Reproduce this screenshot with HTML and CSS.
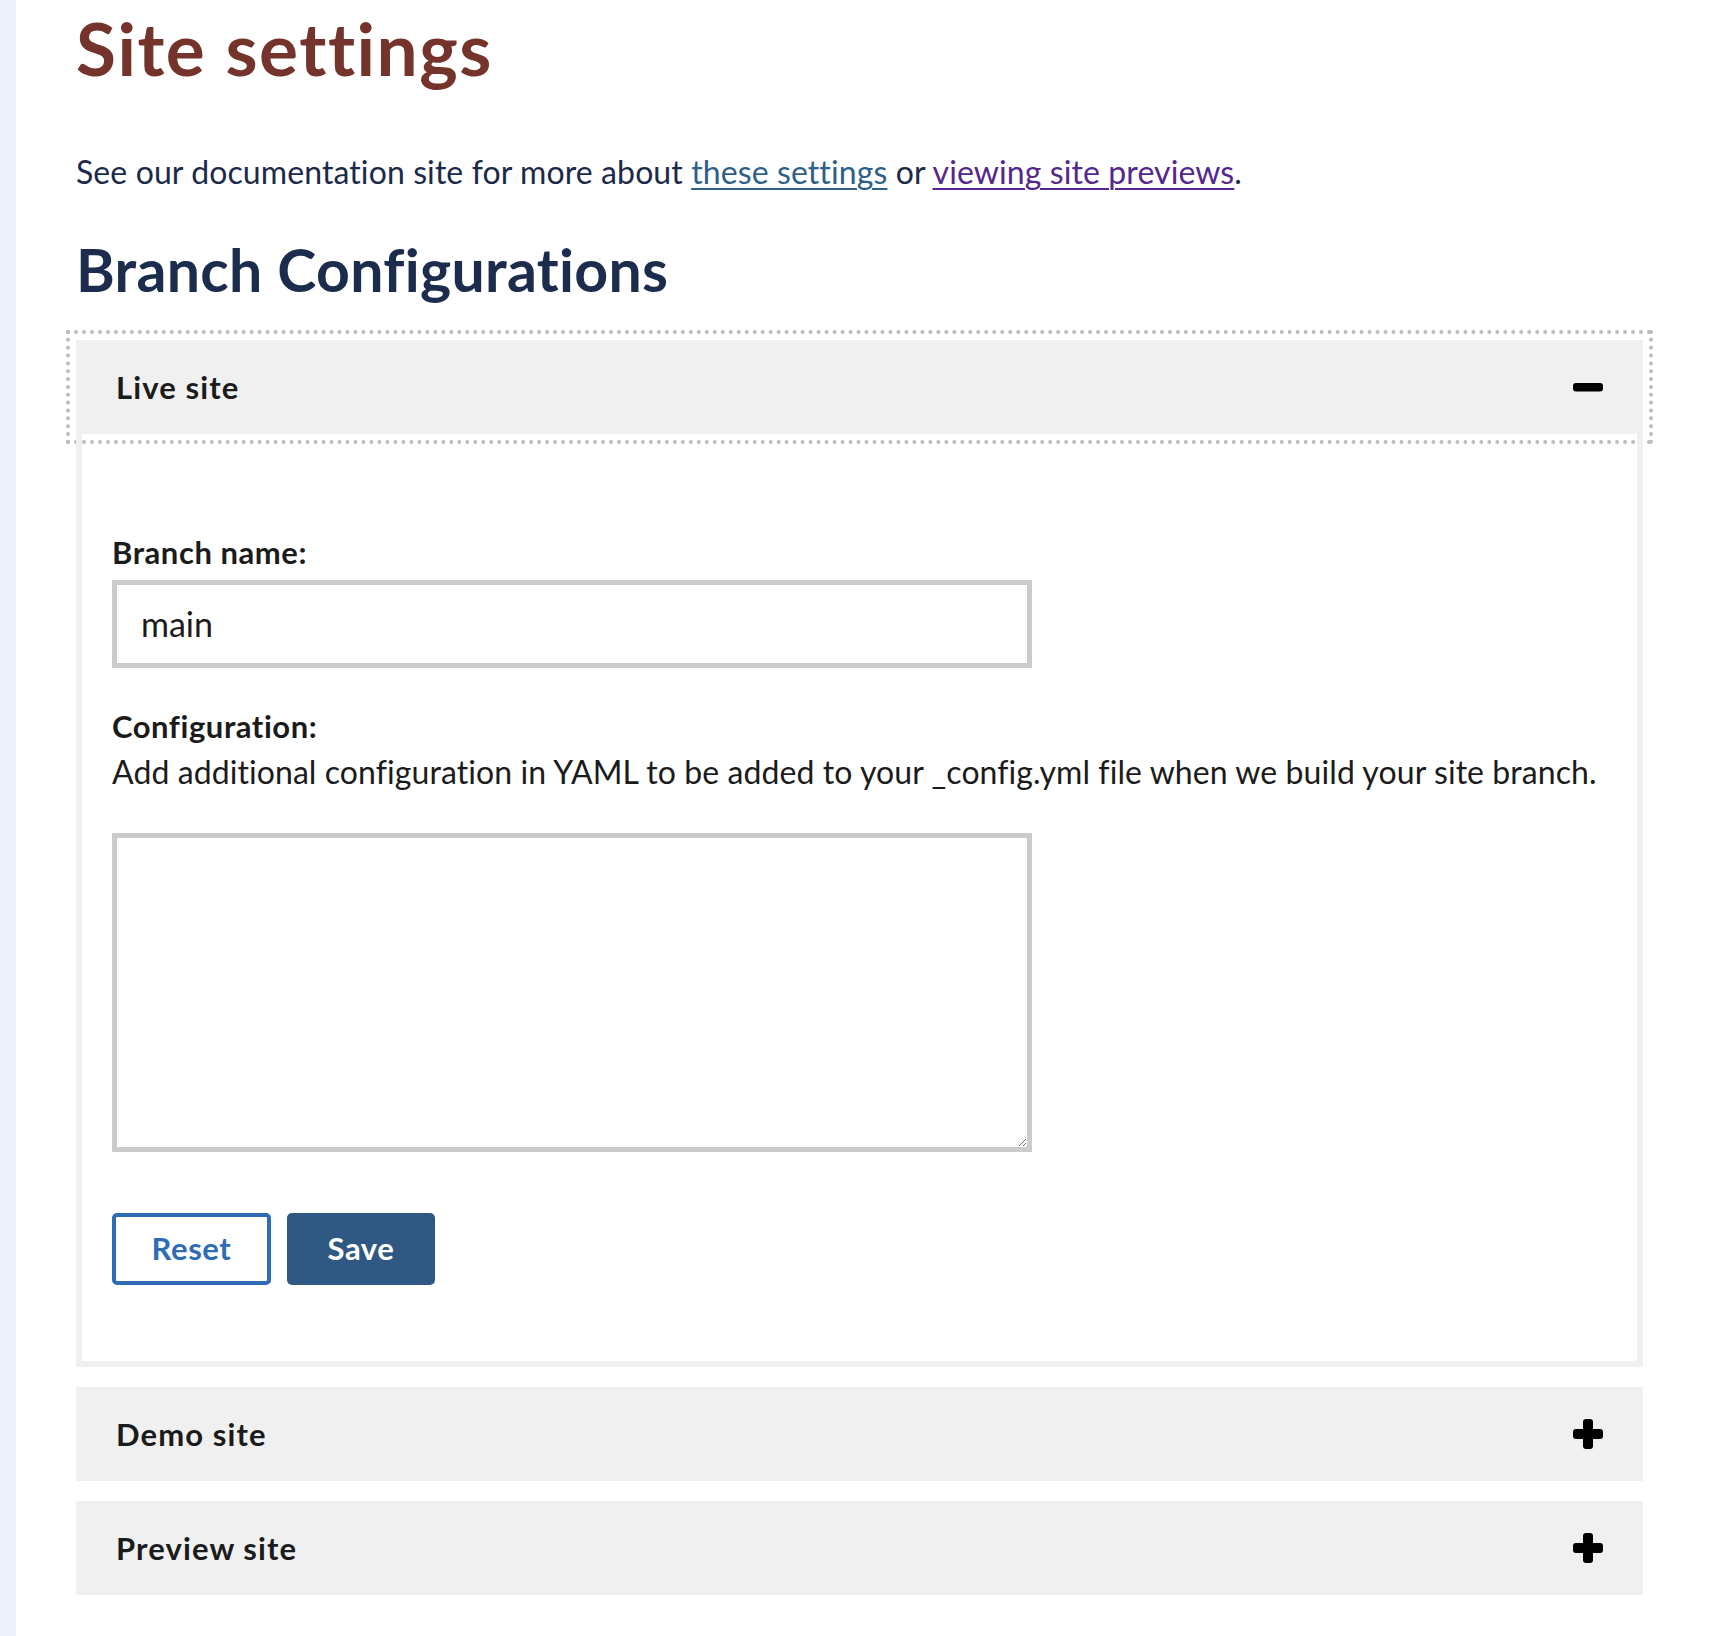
FILE: index.html
```html
<!DOCTYPE html>
<html lang="en">
<head>
<meta charset="utf-8">
<title>Site settings</title>
<link rel="stylesheet" href="styles.css">
</head>
<body>
<div class="layout">
  <aside class="side"></aside>
  <main class="main">
    <h1 class="title">Site settings</h1>
    <p class="intro">See our documentation site for more about <a class="link" href="#settings">these settings</a> or <a class="link link-visited" href="#previews">viewing site previews</a>.</p>
    <h2 class="section-title">Branch Configurations</h2>
    <div class="accordion">
      <div class="acc-item">
        <button class="acc-head is-focused" type="button" aria-expanded="true">
          <span class="acc-title">Live site</span>
          <svg class="acc-icon" width="30" height="30" viewBox="0 0 30 30" aria-hidden="true"><rect x="0" y="11" width="30" height="8.5" rx="3"/></svg>
        </button>
        <div class="acc-body">
          <form class="form">
            <label class="label" for="branch">Branch name:</label>
            <input class="input" id="branch" type="text" value="main">
            <label class="label label-config" for="config">Configuration:</label>
            <p class="help">Add additional configuration in YAML to be added to your _config.yml file when we build your site branch.</p>
            <textarea class="textarea" id="config"></textarea>
            <div class="actions">
              <button class="btn btn-outline" type="button">Reset</button>
              <button class="btn btn-primary" type="button">Save</button>
            </div>
          </form>
        </div>
      </div>
      <div class="acc-item">
        <button class="acc-head" type="button" aria-expanded="false">
          <span class="acc-title">Demo site</span>
          <svg class="acc-icon" width="30" height="30" viewBox="0 0 30 30" aria-hidden="true"><rect x="0" y="10" width="30" height="10" rx="3"/><rect x="10" y="0" width="10" height="30" rx="3"/></svg>
        </button>
      </div>
      <div class="acc-item">
        <button class="acc-head" type="button" aria-expanded="false">
          <span class="acc-title">Preview site</span>
          <svg class="acc-icon" width="30" height="30" viewBox="0 0 30 30" aria-hidden="true"><rect x="0" y="10" width="30" height="10" rx="3"/><rect x="10" y="0" width="10" height="30" rx="3"/></svg>
        </button>
      </div>
    </div>
  </main>
</div>
</body>
</html>
```

FILE: styles.css
```css
* {
  box-sizing: border-box;
}

html, body {
  margin: 0;
  padding: 0;
  background: #ffffff;
}

body {
  font-family: "Lato", "Liberation Sans", sans-serif;
  color: #1b1b1b;
  -webkit-font-smoothing: antialiased;
}

.layout {
  display: flex;
  min-height: 100vh;
}

.side {
  width: 16px;
  flex: none;
  background: #edf2fa;
}

.main {
  flex: 1;
  display: flex;
  flex-direction: column;
  padding: 0 79px 40px 60px;
}

.title {
  margin: 5px 0 0;
  font-size: 73px;
  line-height: 1.2;
  font-weight: 700;
  letter-spacing: 1.5px;
  color: #74342b;
}

.intro {
  margin: 60px 0 0;
  font-size: 32px;
  line-height: 1.2;
  letter-spacing: 0.1px;
  color: #1b2a4a;
}

.link {
  color: #2e5f88;
  text-decoration: underline;
  text-decoration-thickness: 2px;
  text-underline-offset: 4px;
}

.link-visited {
  color: #54278f;
}

.section-title {
  margin: 44px 0 0;
  font-size: 59px;
  line-height: 1.2;
  font-weight: 700;
  letter-spacing: 0.3px;
  color: #1b2c4d;
}

.accordion {
  margin-top: 34px;
  display: flex;
  flex-direction: column;
  gap: 20px;
}

.acc-item {
  display: flex;
  flex-direction: column;
}

.acc-head {
  display: flex;
  align-items: center;
  justify-content: space-between;
  width: 100%;
  height: 94px;
  padding: 0 40px 0 40px;
  margin: 0;
  border: 0;
  background: #f0f0f0;
  font-family: inherit;
  font-size: 31px;
  font-weight: 700;
  letter-spacing: 1.1px;
  color: #1b1b1b;
  text-align: left;
  cursor: pointer;
}

.acc-head.is-focused {
  outline: 4px dotted #bcbcc0;
  outline-offset: 6px;
}

.acc-title {
  line-height: 1.2;
  padding-top: 2px;
}

.acc-icon {
  display: block;
  fill: #000000;
}

.acc-body {
  border: 6px solid #f0f0f0;
  border-top: 0;
  padding: 100px 30px 76px 30px;
}

.form {
  display: flex;
  flex-direction: column;
  align-items: flex-start;
}

.label {
  display: block;
  font-size: 31px;
  line-height: 1.2;
  font-weight: 700;
  letter-spacing: 0.55px;
  color: #1b1b1b;
}

.input {
  margin-top: 9px;
  width: 920px;
  height: 88px;
  border: 5px solid #cbcbcb;
  border-radius: 0;
  padding: 0 24px;
  font-family: inherit;
  font-size: 34px;
  color: #1b1b1b;
  background: #ffffff;
}

.label-config {
  margin-top: 40px;
}

.help {
  margin: 8px 0 0;
  font-size: 32px;
  line-height: 1.2;
  letter-spacing: 0.08px;
  color: #1b1b1b;
}

.textarea {
  margin-top: 41px;
  width: 920px;
  height: 319px;
  border: 5px solid #cbcbcb;
  border-radius: 0;
  padding: 16px 24px;
  font-family: inherit;
  font-size: 34px;
  background: #ffffff;
  resize: both;
}

.actions {
  margin-top: 61px;
  display: flex;
  gap: 16px;
}

.btn {
  height: 72px;
  border-radius: 5px;
  font-family: inherit;
  font-size: 31px;
  font-weight: 700;
  letter-spacing: 0.6px;
  line-height: 1;
  cursor: pointer;
}

.btn-outline {
  width: 159px;
  background: #ffffff;
  border: 4px solid #2e6db5;
  color: #2e6db5;
}

.btn-primary {
  width: 148px;
  background: #2f5982;
  border: 0;
  color: #ffffff;
}
```
